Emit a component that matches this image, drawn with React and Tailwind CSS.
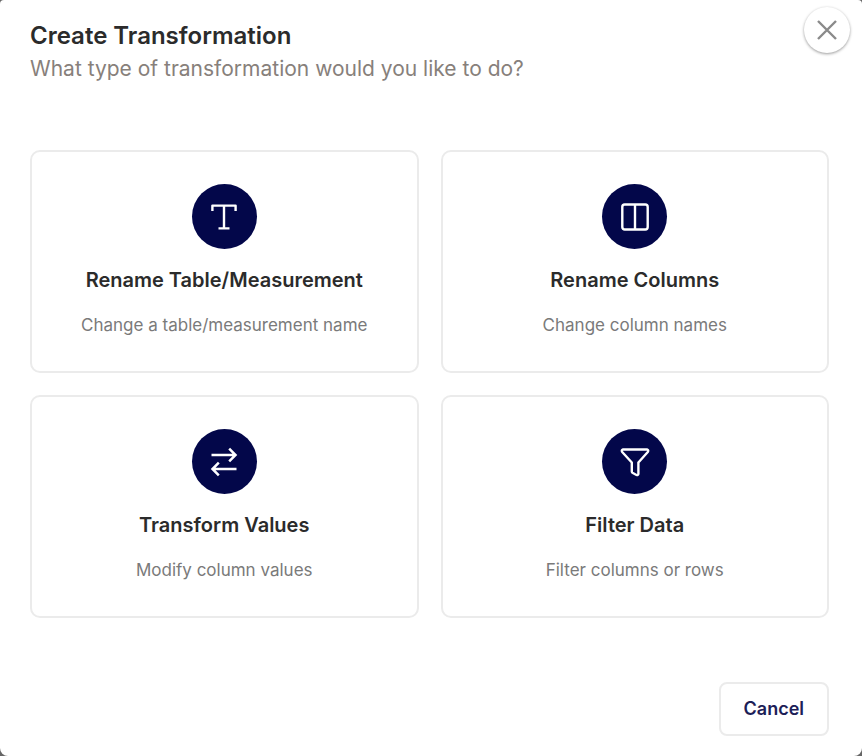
const TextIcon = () => (
  <svg viewBox="0 0 32 32" className="size-8" fill="none" stroke="currentColor" strokeWidth="2.4" strokeLinejoin="round" aria-hidden="true">
    <path d="M4.4 10V4.6H27.6V10M16 4.6V27.4M10.5 27.4H21.5" />
  </svg>
);

const ColumnsIcon = () => (
  <svg viewBox="0 0 32 32" className="size-8" fill="none" stroke="currentColor" strokeWidth="2.4" aria-hidden="true">
    <rect x="3.3" y="3.5" width="25.4" height="25" rx="2.4" />
    <path d="M16 3.5V28.5" />
  </svg>
);

const SwapIcon = () => (
  <svg viewBox="0 0 32 32" className="size-8" fill="none" stroke="currentColor" strokeWidth="2.5" aria-hidden="true">
    <path d="M3.5 9H27.5M21.2 2.7L27.5 9L21.2 15.3" />
    <path d="M28.5 23H4.5M10.8 16.7L4.5 23L10.8 29.3" />
  </svg>
);

const FunnelIcon = () => (
  <svg viewBox="0 0 32 32" className="size-8" fill="none" stroke="currentColor" strokeWidth="2.4" strokeLinecap="round" strokeLinejoin="round" aria-hidden="true">
    <path d="M4 3.5H28Q30 4 28.8 6L19.4 16.5V28Q19 29.6 17.5 29L13.4 26.8Q12.8 26.4 12.8 25.5V16.5L3.2 6Q2 4 4 3.5Z" />
  </svg>
);

const OPTIONS = [
  { title: 'Rename Table/Measurement', description: 'Change a table/measurement name', Icon: TextIcon },
  { title: 'Rename Columns', description: 'Change column names', Icon: ColumnsIcon },
  { title: 'Transform Values', description: 'Modify column values', Icon: SwapIcon },
  { title: 'Filter Data', description: 'Filter columns or rows', Icon: FunnelIcon },
];

const OptionCard = ({ title, description, Icon }) => (
  <button
    type="button"
    className="flex cursor-pointer flex-col items-center rounded-[10px] border-2 border-[#ebebeb] bg-white px-4 py-8 text-center"
  >
    <span className="flex size-[65px] items-center justify-center rounded-full bg-[#03074a] text-white">
      <Icon />
    </span>
    <span className="mt-4 text-xl leading-[30px] font-semibold text-[#2b2b2b]">{title}</span>
    <span className="mt-4 text-[17px] leading-7 text-[#7a7a7a]">{description}</span>
  </button>
);

export default function App() {
  return (
    <div className="min-h-screen bg-[#666]">
      <div
        role="dialog"
        aria-labelledby="dialog-title"
        className="relative flex min-h-screen flex-col rounded-t-sm rounded-b-lg bg-white pt-5 pr-[33px] pb-5 pl-[30px] font-['Inter','Liberation_Sans',sans-serif]"
      >
        <button
          type="button"
          aria-label="Close"
          className="absolute top-[7px] right-3 flex size-[46px] cursor-pointer items-center justify-center rounded-full bg-white text-[#8a8a8a] shadow-[0_1px_3px_rgba(0,0,0,0.4)]"
        >
          <svg viewBox="0 0 20 20" className="size-5" stroke="currentColor" strokeWidth="2.4" aria-hidden="true">
            <path d="M1 1L19 19M19 1L1 19" />
          </svg>
        </button>

        <header>
          <h2 id="dialog-title" className="text-2xl leading-8 font-semibold text-[#2b2b2b]">Create Transformation</h2>
          <p className="text-[21px] leading-[34px] text-[#87807b]">What type of transformation would you like to do?</p>
        </header>

        <div className="mt-16 grid grid-cols-2 gap-[22px]">
          {OPTIONS.map((option) => (
            <OptionCard key={option.title} {...option} />
          ))}
        </div>

        <footer className="mt-auto flex justify-end">
          <button
            type="button"
            className="cursor-pointer rounded-lg border-2 border-[#ebebeb] bg-white px-[23px] py-3 text-lg leading-[26px] font-semibold text-[#1c2057]"
          >
            Cancel
          </button>
        </footer>
      </div>
    </div>
  );
}
